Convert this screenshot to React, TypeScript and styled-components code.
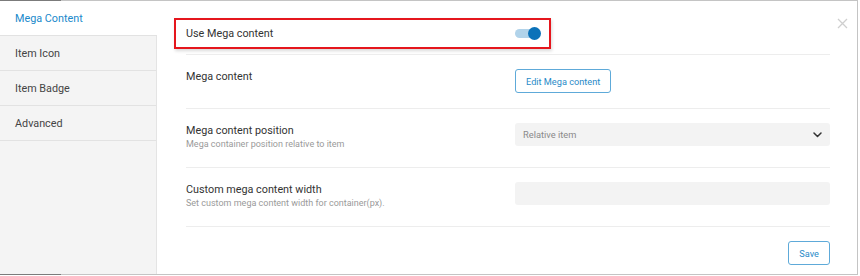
import styled, { createGlobalStyle } from "styled-components";

const GlobalStyle = createGlobalStyle`
  html, body {
    margin: 0;
    padding: 0;
    background: #ffffff;
  }
  body {
    font-family: Roboto, "Liberation Sans", Arial, sans-serif;
    color: #333;
  }
  * {
    box-sizing: border-box;
  }
`;

const Frame = styled.div`
  position: relative;
  width: 858px;
  height: 275px;
  display: flex;
  background: #fff;
  border-style: solid;
  border-width: 1px 1px 1px 0;
  border-image: linear-gradient(to right, #7b7b7b 0 62px, #c4c4c4 62px) 1;
`;

const Sidebar = styled.nav`
  width: 157px;
  flex-shrink: 0;
  display: flex;
  flex-direction: column;
  background: #f4f4f4;
  border-right: 1px solid #e4e4e4;
`;

const Tab = styled.div<{ $active?: boolean }>`
  height: 35px;
  display: flex;
  align-items: center;
  padding-left: 15px;
  font-size: 10.8px;
  color: ${(p) => (p.$active ? "#2089cb" : "#444")};
  background: ${(p) => (p.$active ? "#fff" : "transparent")};
  margin-right: ${(p) => (p.$active ? "-1px" : "0")};
  border-bottom: 1px solid #e2e2e2;
`;

const Content = styled.section`
  flex: 1;
  display: flex;
  flex-direction: column;
  padding: 11px 27px 0 29px;
`;

const Row = styled.div<{ $center?: boolean }>`
  position: relative;
  display: grid;
  grid-template-columns: 329px 1fr;
  align-items: ${(p) => (p.$center ? "center" : "start")};
  padding: ${(p) => (p.$center ? "14px 0 13px" : "14px 0 15px")};
  border-bottom: 1px solid #ededed;
`;

const LabelBox = styled.div`
  display: flex;
  flex-direction: column;
`;

const Label = styled.div`
  font-size: 10.8px;
  line-height: 15px;
  color: #333;
`;

const Hint = styled.div`
  font-size: 9px;
  line-height: 12px;
  margin-bottom: 2px;
  color: #9a9a9a;
`;

const Annotation = styled.div`
  position: absolute;
  left: -12px;
  top: 6px;
  width: 377px;
  height: 31px;
  border: 2px solid #e5161d;
  box-shadow: 1px 2px 3px rgba(0, 0, 0, 0.15);
  pointer-events: none;
`;

const Switch = styled.div`
  position: relative;
  width: 26px;
  height: 14px;
  display: flex;
  align-items: center;
`;

const Track = styled.div`
  width: 24px;
  height: 9px;
  border-radius: 5px;
  background: #b1d3ea;
`;

const Knob = styled.div`
  position: absolute;
  right: 0;
  top: 0;
  width: 13px;
  height: 13px;
  border-radius: 50%;
  background: #0b72b9;
`;

const OutlineButton = styled.button`
  height: 24px;
  padding: 0 10px;
  font-family: inherit;
  font-size: 9.2px;
  color: #2a8bc8;
  background: #fff;
  border: 1px solid #5eaad9;
  border-radius: 3px;
  cursor: pointer;
`;

const Field = styled.div`
  height: 23px;
  width: 100%;
  display: flex;
  align-items: center;
  justify-content: space-between;
  padding: 0 8px;
  background: #f3f3f3;
  border-radius: 3px;
  font-size: 9.3px;
  color: #8a8a8a;
`;

const Footer = styled.div`
  display: flex;
  justify-content: flex-end;
  padding-top: 14px;
`;

const Close = styled.div`
  position: absolute;
  top: 13px;
  right: 9px;
  width: 11px;
  height: 11px;
`;

function App() {
  return (
    <>
      <GlobalStyle />
      <Frame>
        <Sidebar>
          <Tab $active>Mega Content</Tab>
          <Tab>Item Icon</Tab>
          <Tab>Item Badge</Tab>
          <Tab>Advanced</Tab>
        </Sidebar>
        <Content>
          <Row $center>
            <Label>Use Mega content</Label>
            <Switch>
              <Track />
              <Knob />
            </Switch>
            <Annotation />
          </Row>
          <Row>
            <Label>Mega content</Label>
            <div>
              <OutlineButton>Edit Mega content</OutlineButton>
            </div>
          </Row>
          <Row>
            <LabelBox>
              <Label>Mega content position</Label>
              <Hint>Mega container position relative to item</Hint>
            </LabelBox>
            <Field>
              <span>Relative item</span>
              <svg width="9" height="6" viewBox="0 0 9 6">
                <polyline
                  points="1,1 4.5,4.5 8,1"
                  fill="none"
                  stroke="#333"
                  strokeWidth="1.5"
                  strokeLinecap="round"
                  strokeLinejoin="round"
                />
              </svg>
            </Field>
          </Row>
          <Row>
            <LabelBox>
              <Label>Custom mega content width</Label>
              <Hint>Set custom mega content width for container(px).</Hint>
            </LabelBox>
            <Field />
          </Row>
          <Footer>
            <OutlineButton>Save</OutlineButton>
          </Footer>
        </Content>
        <Close>
          <svg width="11" height="11" viewBox="0 0 11 11">
            <path d="M1 1 L10 10 M10 1 L1 10" stroke="#cfcfcf" strokeWidth="1.3" />
          </svg>
        </Close>
      </Frame>
    </>
  );
}

export default App;
